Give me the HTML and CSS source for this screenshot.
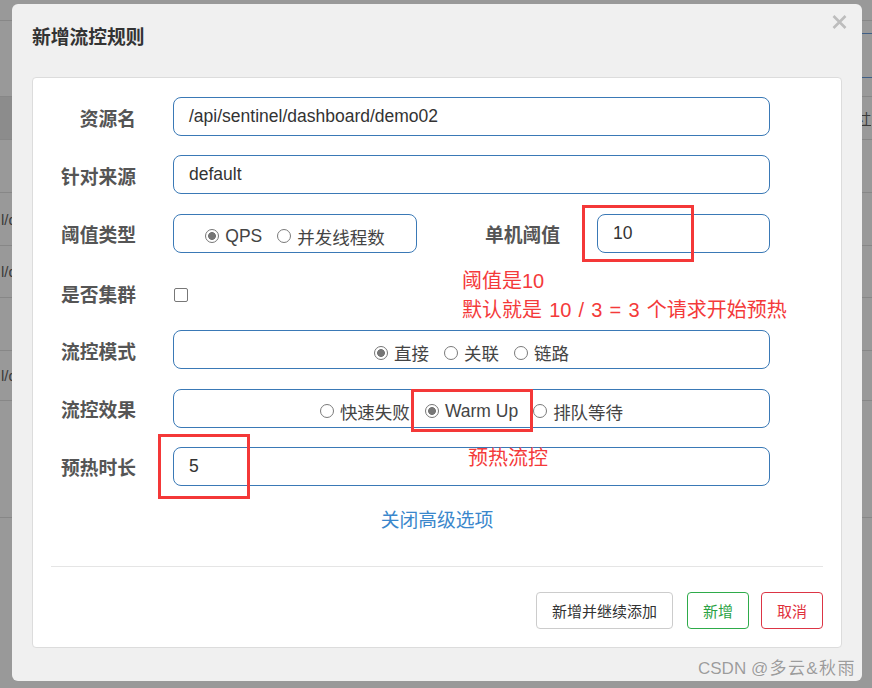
FILE: index.html
```html
<!DOCTYPE html>
<html lang="zh-CN">
<head>
<meta charset="utf-8">
<title>新增流控规则</title>
<link rel="stylesheet" href="styles.css">
</head>
<body>
<div class="backdrop">
  <div class="bg-row h0"></div>
  <div class="bg-row h1"><span></span><span class="bg-tab"></span></div>
  <div class="bg-row h2"><span class="bg-head"></span><span class="bg-txt right">寸</span></div>
  <div class="bg-row h3"></div>
  <div class="bg-row h4"><span class="bg-txt">l/dashboard</span></div>
  <div class="bg-row h5"><span class="bg-txt">l/dashboard</span></div>
  <div class="bg-row h6"></div>
  <div class="bg-row h7"><span class="bg-txt">l/dashboard</span></div>
  <div class="bg-row h8"></div>
</div>

<div class="dialog">
  <div class="dialog-header">
    <h4 class="dialog-title">新增流控规则</h4>
    <button class="close" type="button" aria-label="close">
      <svg width="15" height="14" viewBox="0 0 15 14"><path d="M1.5 1 L13.5 13 M13.5 1 L1.5 13" stroke="#bdbdbd" stroke-width="2.6" stroke-linecap="butt"/></svg>
    </button>
  </div>

  <div class="panel">
    <div class="form">
      <div class="row">
        <span class="label">资源名</span>
        <div class="input">/api/sentinel/dashboard/demo02</div>
      </div>
      <div class="row">
        <span class="label">针对来源</span>
        <div class="input">default</div>
      </div>
      <div class="row split">
        <span class="label">阈值类型</span>
        <div class="input radio-box">
          <span class="opt"><span class="radio on"></span>QPS</span>
          <span class="opt"><span class="radio"></span>并发线程数</span>
        </div>
        <span class="label">单机阈值</span>
        <div class="input">10</div>
      </div>
      <div class="row check-row">
        <span class="label">是否集群</span>
        <span class="checkbox"></span>
      </div>
      <div class="row">
        <span class="label">流控模式</span>
        <div class="input radio-box">
          <span class="opt"><span class="radio on"></span>直接</span>
          <span class="opt"><span class="radio"></span>关联</span>
          <span class="opt"><span class="radio"></span>链路</span>
        </div>
      </div>
      <div class="row">
        <span class="label">流控效果</span>
        <div class="input radio-box">
          <span class="opt"><span class="radio"></span>快速失败</span>
          <span class="opt"><span class="radio on"></span>Warm Up</span>
          <span class="opt"><span class="radio"></span>排队等待</span>
        </div>
      </div>
      <div class="row">
        <span class="label">预热时长</span>
        <div class="input">5</div>
      </div>
    </div>

    <div class="toggle"><a class="link">关闭高级选项</a></div>
    <div class="sep"></div>
    <div class="footer">
      <button class="btn btn-default" type="button">新增并继续添加</button>
      <button class="btn btn-green" type="button">新增</button>
      <button class="btn btn-red" type="button">取消</button>
    </div>

    <div class="mark box-a"></div>
    <div class="mark box-b"></div>
    <div class="mark box-c"></div>
    <div class="note note-a">阈值是10<br>默认就是 10 / 3 = 3 个请求开始预热</div>
    <div class="note note-b">预热流控</div>
  </div>
</div>

<div class="watermark">CSDN <span class="wm-cjk">@多云&amp;秋雨</span></div>
</body>
</html>
```

FILE: styles.css
```css
html, body {
  margin: 0;
  padding: 0;
}
body {
  width: 872px;
  height: 688px;
  overflow: hidden;
  position: relative;
  background: #999999;
  font-family: "Liberation Sans", "Noto Sans CJK SC", sans-serif;
}

/* background page under the overlay */
.backdrop {
  display: flex;
  flex-direction: column;
}
.bg-row {
  display: flex;
  justify-content: space-between;
  align-items: center;
  border-bottom: 1px solid #878787;
  font-size: 15px;
  color: #3a3a3a;
}
.h0 { height: 20px; }
.h1 { height: 75px; align-items: flex-start; }
.h2 { height: 42px; align-items: stretch; }
.h3 { height: 52px; }
.h4 { height: 52px; }
.h5 { height: 51px; }
.h6 { height: 52px; }
.h7 { height: 49px; }
.h8 { height: 116px; }
.bg-tab {
  width: 40px;
  height: 43px;
  margin-top: 12px;
  border-top: 1px solid #3f5f86;
  border-bottom: 1px solid #3f5f86;
}
.bg-head {
  width: 14px;
  background: #8c8c8c;
}
.bg-txt {
  padding-left: 1px;
}
.bg-txt.right {
  align-self: center;
  font-size: 14px;
  margin-right: 1px;
  text-decoration: underline;
}

/* dialog */
.dialog {
  position: absolute;
  left: 12px;
  top: 4px;
  width: 850px;
  height: 677px;
  background: #f0f0f0;
  border-radius: 6px;
}
.dialog-header {
  display: flex;
  justify-content: space-between;
  align-items: flex-start;
  height: 73px;
  padding: 0 15px 0 20px;
  box-sizing: border-box;
}
.dialog-title {
  margin: 21px 0 0;
  font-size: 18.75px;
  line-height: 26px;
  font-weight: bold;
  color: #333333;
}
.close {
  margin-top: 11px;
  width: 15px;
  height: 14px;
  padding: 0;
  border: 0;
  background: none;
  display: block;
}
.close svg {
  display: block;
}

.panel {
  margin: 0 20px;
  height: 571px;
  box-sizing: border-box;
  background: #ffffff;
  border: 1px solid #dcdcdc;
  border-radius: 4px;
  position: relative;
}

.form {
  padding: 19px 71px 0 0;
  display: flex;
  flex-direction: column;
  gap: 19.33px;
}
.row {
  display: grid;
  grid-template-columns: 103px 1fr;
  column-gap: 37px;
  height: 39px;
  align-items: center;
}
.row.split {
  grid-template-columns: 103px 244px 106px 1fr;
}
.row.check-row {
  box-sizing: border-box;
  padding-top: 7px;
}
.label {
  text-align: right;
  font-weight: bold;
  font-size: 18.75px;
  line-height: 26px;
  padding-top: 6px;
  color: #555555;
  white-space: nowrap;
}
.check-row .label {
  padding-top: 2px;
}
.input {
  height: 39px;
  box-sizing: border-box;
  border: 1px solid #3a79b6;
  border-radius: 8px;
  padding: 0 15px;
  display: flex;
  align-items: center;
  font-size: 17.5px;
  color: #333333;
  white-space: nowrap;
}
.radio-box {
  justify-content: center;
  padding-top: 6px;
  color: #444444;
}
.opt {
  display: flex;
  align-items: center;
  gap: 6px;
}
.opt + .opt {
  margin-left: 15px;
}
.radio {
  width: 14px;
  height: 14px;
  box-sizing: border-box;
  border: 1px solid #7a7a7a;
  border-radius: 50%;
  background: #ffffff;
}
.radio.on {
  background: radial-gradient(circle, #767676 0 3.6px, #ffffff 4.2px);
  border-color: #767676;
}
.checkbox {
  width: 14px;
  height: 14px;
  box-sizing: border-box;
  margin-left: 1px;
  border: 1px solid #777777;
  border-radius: 2px;
  background: #ffffff;
}

.toggle {
  margin-top: 22px;
  text-align: center;
  font-size: 18.75px;
  line-height: 26px;
}
.link {
  color: #3a87cc;
  text-decoration: none;
}
.sep {
  margin: 32px 18px 0;
  border-top: 1px solid #e5e5e5;
}
.footer {
  display: flex;
  justify-content: flex-end;
  padding: 25px 18px 0;
}
.btn {
  height: 37px;
  padding: 0 15px;
  font-family: "Liberation Sans", "Noto Sans CJK SC", sans-serif;
  font-size: 15px;
  background: #ffffff;
  border-radius: 4px;
  border: 1px solid #cccccc;
  color: #333333;
}
.btn-green {
  margin-left: 14px;
  border-color: #2eab4a;
  color: #2aa244;
}
.btn-red {
  margin-left: 12px;
  border-color: #dc3545;
  color: #e0303c;
}

/* annotations drawn over the form */
.mark {
  position: absolute;
  box-sizing: border-box;
  border: 3px solid #f43838;
}
.box-a { left: 549px; top: 127px; width: 112px; height: 57px; }
.box-b { left: 378px; top: 311px; width: 122px; height: 43px; }
.box-c { left: 125px; top: 356px; width: 92px; height: 65px; }
.note {
  position: absolute;
  color: #f43a3a;
  font-size: 20px;
  line-height: 29px;
  white-space: nowrap;
}
.note-a { left: 429px; top: 189px; word-spacing: 1.6px; }
.note-b { left: 435px; top: 366px; }

.watermark {
  position: absolute;
  left: 698px;
  top: 658px;
  font-size: 17px;
  line-height: 22px;
  color: #9c9c9c;
  text-shadow: 0 0 1px #ffffff;
  white-space: nowrap;
}
.wm-cjk {
  letter-spacing: 1.4px;
}
```
